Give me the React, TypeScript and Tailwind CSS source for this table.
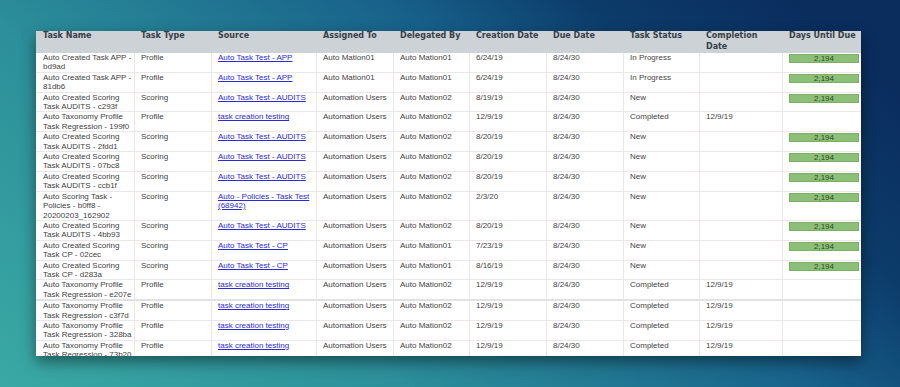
import React from 'react';

type Row = {
  name: string[];
  type: string;
  source: string[];
  assigned: string;
  delegated: string;
  created: string;
  due: string;
  status: string;
  completed: string;
  days: string;
  thick?: boolean;
};

const scoring = (id: string, source = 'Auto Task Test - AUDITS', delegated = 'Auto Mation02', created = '8/20/19'): Row => ({
  name: ['Auto Created Scoring', `Task AUDITS - ${id}`],
  type: 'Scoring',
  source: [source],
  assigned: 'Automation Users',
  delegated,
  created,
  due: '8/24/30',
  status: 'New',
  completed: '',
  days: '2,194',
});

const regression = (id: string, thick = false): Row => ({
  name: ['Auto Taxonomy Profile', `Task Regression - ${id}`],
  type: 'Profile',
  source: ['task creation testing'],
  assigned: 'Automation Users',
  delegated: 'Auto Mation02',
  created: '12/9/19',
  due: '8/24/30',
  status: 'Completed',
  completed: '12/9/19',
  days: '',
  thick,
});

const rows: Row[] = [
  { name: ['Auto Created Task APP -', 'bd9ad'], type: 'Profile', source: ['Auto Task Test - APP'], assigned: 'Auto Mation01', delegated: 'Auto Mation01', created: '6/24/19', due: '8/24/30', status: 'In Progress', completed: '', days: '2,194' },
  { name: ['Auto Created Task APP -', '81db6'], type: 'Profile', source: ['Auto Task Test - APP'], assigned: 'Auto Mation01', delegated: 'Auto Mation01', created: '6/24/19', due: '8/24/30', status: 'In Progress', completed: '', days: '2,194' },
  { ...scoring('c293f'), created: '8/19/19' },
  regression('199f0'),
  scoring('2fdd1'),
  scoring('07bc8'),
  scoring('ccb1f'),
  {
    name: ['Auto Scoring Task -', 'Policies - b0ff8 -', '20200203_162902'],
    type: 'Scoring',
    source: ['Auto - Policies - Task Test', '(68942)'],
    assigned: 'Automation Users',
    delegated: 'Auto Mation02',
    created: '2/3/20',
    due: '8/24/30',
    status: 'New',
    completed: '',
    days: '2,194',
  },
  scoring('4bb93'),
  { ...scoring('02cec', 'Auto Task Test - CP', 'Auto Mation01', '7/23/19'), name: ['Auto Created Scoring', 'Task CP - 02cec'] },
  { ...scoring('d283a', 'Auto Task Test - CP', 'Auto Mation01', '8/16/19'), name: ['Auto Created Scoring', 'Task CP - d283a'] },
  regression('e207e', true),
  regression('c3f7d'),
  regression('328ba'),
  regression('73b20'),
];

const headers: { label: string[]; width: string }[] = [
  { label: ['Task Name'], width: 'w-[98px]' },
  { label: ['Task Type'], width: 'w-[77px]' },
  { label: ['Source'], width: 'w-[105px]' },
  { label: ['Assigned To'], width: 'w-[77px]' },
  { label: ['Delegated By'], width: 'w-[76px]' },
  { label: ['Creation Date'], width: 'w-[77px]' },
  { label: ['Due Date'], width: 'w-[77px]' },
  { label: ['Task Status'], width: 'w-[76px]' },
  { label: ['Completion', 'Date'], width: 'w-[83px]' },
  { label: ['Days Until Due'], width: 'w-[79px]' },
];

const Lines: React.FC<{ lines: string[] }> = ({ lines }) => (
  <>
    {lines.map((l, i) => (
      <div key={i} className="whitespace-nowrap">
        {l}
      </div>
    ))}
  </>
);

const App: React.FC = () => {
  const cell = (first: boolean, thick?: boolean) =>
    `align-top p-0 ${first ? 'pl-[7px]' : 'pl-[6px] border-l border-[#ece6e9]'} ${
      thick ? 'border-b-2 border-b-[#e2e2e2]' : 'border-b border-b-[#ece6e9]'
    }`;

  return (
    <div className="h-[387px] w-[900px] overflow-hidden bg-[linear-gradient(42deg,#3aa9a4_0%,#2c8f9a_30%,#1f7290_50%,#17608a_62%,#0c3c6a_76%,#0a2d5e_92%)] pl-[36px] pt-[31px]">
      <div className="h-[325px] w-[825px] overflow-hidden bg-white shadow-[0_6px_14px_rgba(0,0,0,0.45)]">
        <table className="w-[825px] table-fixed border-separate border-spacing-0 font-['Liberation_Sans',Arial,sans-serif] text-[8px] leading-[9.4px] text-[#3f3f3f]">
          <colgroup>
            {headers.map((h, i) => (
              <col key={i} className={h.width} />
            ))}
          </colgroup>
          <thead>
            <tr className="bg-[#cdd2d7]">
              {headers.map((h, i) => (
                <th
                  key={i}
                  className="h-[22px] p-0 pl-[7px] text-left align-top font-['DejaVu_Sans',Verdana,sans-serif] text-[8px] font-bold leading-[10.6px] text-[#363e47]"
                >
                  <Lines lines={h.label} />
                </th>
              ))}
            </tr>
          </thead>
          <tbody>
            {rows.map((r, i) => (
              <tr key={i}>
                <td className={cell(true, r.thick)}>
                  <Lines lines={r.name} />
                </td>
                <td className={cell(false, r.thick)}>{r.type}</td>
                <td className={cell(false, r.thick)}>
                  <a href="#" className="text-[#2a2ad8] underline">
                    <Lines lines={r.source} />
                  </a>
                </td>
                <td className={cell(false, r.thick)}>{r.assigned}</td>
                <td className={cell(false, r.thick)}>{r.delegated}</td>
                <td className={cell(false, r.thick)}>{r.created}</td>
                <td className={cell(false, r.thick)}>{r.due}</td>
                <td className={cell(false, r.thick)}>{r.status}</td>
                <td className={cell(false, r.thick)}>{r.completed}</td>
                <td className={cell(false, r.thick)}>
                  {r.days && (
                    <div className="mt-px mr-[2px] h-[9px] border border-[#7cae66] bg-[#8dc077] text-center leading-[8px] text-[#2f4a2a]">
                      {r.days}
                    </div>
                  )}
                </td>
              </tr>
            ))}
          </tbody>
        </table>
      </div>
    </div>
  );
};

export default App;
